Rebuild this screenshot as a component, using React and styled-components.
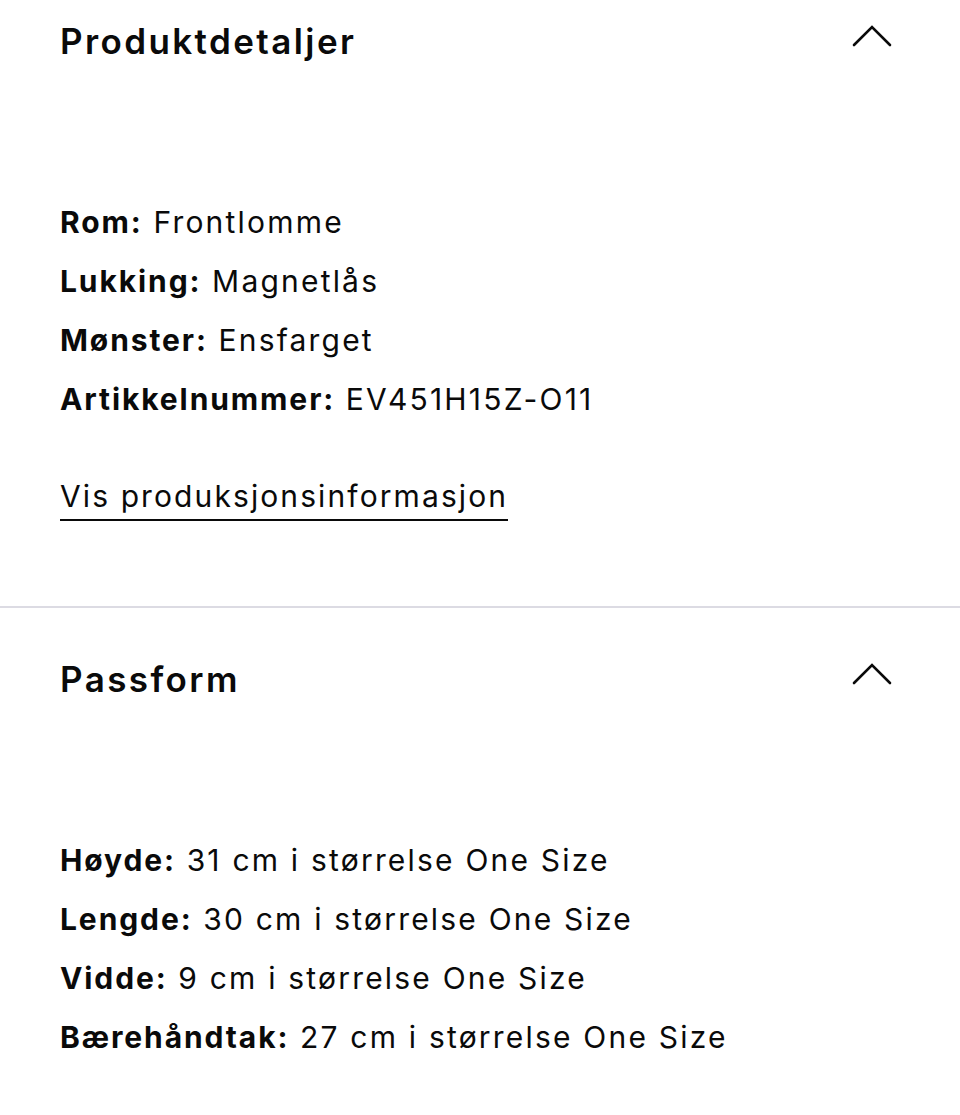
import styled, { createGlobalStyle } from "styled-components"

const GlobalStyle = createGlobalStyle`
    html, body {
        margin: 0;
        padding: 0;
        background: #ffffff;
    }
    body {
        font-family: Inter, "Liberation Sans", Arial, sans-serif;
        color: #0a0a0a;
        -webkit-font-smoothing: antialiased;
    }
`

const Page = styled.div`
    width: 960px;
    min-height: 1115px;
    background: #ffffff;
`

const Section = styled.section`
    padding: ${props => props.first ? "21px" : "51px"} 60px ${props => props.last ? "0" : "85px"} 60px;
    border-bottom: ${props => props.last ? "none" : "2px solid #dcdbe3"};
`

const Header = styled.div`
    display: flex;
    align-items: center;
    justify-content: space-between;
    height: 40px;
`

const Title = styled.h2`
    margin: 0;
    font-size: 35px;
    font-weight: 600;
    line-height: 40px;
    letter-spacing: 2.4px;
`

const Chevron = styled.svg`
    width: 40px;
    height: 22px;
    margin-right: 8px;
    margin-top: -10px;
`

const List = styled.div`
    margin-top: 132px;
    display: flex;
    flex-direction: column;
`

const Row = styled.div`
    font-size: 30px;
    line-height: 59px;
    font-weight: 400;
    letter-spacing: 2.2px;
    white-space: nowrap;
`

const Label = styled.span`
    font-weight: 700;
    letter-spacing: 1.9px;
`

const LinkLine = styled.div`
    margin-top: 50px;
    display: flex;
`

const Link = styled.span`
    font-size: 30px;
    line-height: 34px;
    letter-spacing: 2.1px;
    border-bottom: 2px solid #0a0a0a;
    padding-bottom: 6px;
`

const ChevronUp = () => (
    <Chevron viewBox="0 0 40 22" fill="none">
        <path d="M2 20 L20 2 L38 20" stroke="#0a0a0a" strokeWidth="2.6" strokeLinecap="round" strokeLinejoin="miter" />
    </Chevron>
)

const details = [
    { label: "Rom:", value: "Frontlomme" },
    { label: "Lukking:", value: "Magnetlås" },
    { label: "Mønster:", value: "Ensfarget" },
    { label: "Artikkelnummer:", value: "EV451H15Z-O11" },
]

const fit = [
    { label: "Høyde:", value: "31 cm i størrelse One Size" },
    { label: "Lengde:", value: "30 cm i størrelse One Size" },
    { label: "Vidde:", value: "9 cm i størrelse One Size" },
    { label: "Bærehåndtak:", value: "27 cm i størrelse One Size" },
]

const App = () => {
    return (
        <Page>
            <GlobalStyle />
            <Section first>
                <Header>
                    <Title>Produktdetaljer</Title>
                    <ChevronUp />
                </Header>
                <List>
                    {details.map(item => (
                        <Row key={item.label}>
                            <Label>{item.label}</Label> {item.value}
                        </Row>
                    ))}
                </List>
                <LinkLine>
                    <Link>Vis produksjonsinformasjon</Link>
                </LinkLine>
            </Section>
            <Section last>
                <Header>
                    <Title>Passform</Title>
                    <ChevronUp />
                </Header>
                <List>
                    {fit.map(item => (
                        <Row key={item.label}>
                            <Label>{item.label}</Label> {item.value}
                        </Row>
                    ))}
                </List>
            </Section>
        </Page>
    )
}

export default App
